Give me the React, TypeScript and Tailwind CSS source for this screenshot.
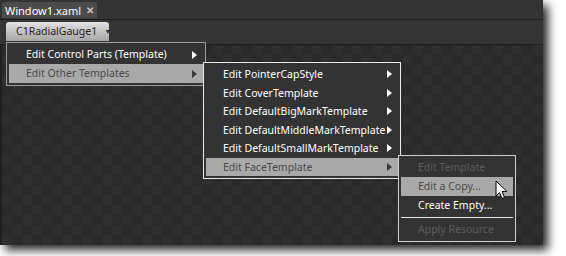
const font = { fontFamily: '"Noto Sans", "Liberation Sans", sans-serif' }

function Arrow({ className = 'text-white' }: { className?: string }) {
  return (
    <svg width="5" height="8" viewBox="0 0 5 8" className={className}>
      <path d="M0 0 L5 4 L0 8 Z" fill="currentColor" />
    </svg>
  )
}

interface ItemProps {
  label: string
  active?: boolean
  disabled?: boolean
  sub?: boolean
  h?: string
}

function MenuItem({ label, active, disabled, sub, h = 'h-[19px]' }: ItemProps) {
  const color = disabled ? 'text-[#5c5c5c]' : active ? 'text-[#4a4a4a]' : 'text-white'
  return (
    <div className={`flex items-center justify-between pl-[17px] pr-[6px] ${h} ${active ? 'bg-[#a9a9a9]' : ''}`}>
      <span className={`whitespace-nowrap ${color}`}>{label}</span>
      {sub && <Arrow className={active ? 'text-[#3a3a3a]' : 'text-white'} />}
    </div>
  )
}

function Cursor() {
  return (
    <svg width="13" height="20" viewBox="0 0 13 20" className="absolute left-[495px] top-[180px]">
      <path
        d="M1 1 L1 16 L4.5 12.5 L7 18.5 L9.5 17.5 L7 11.5 L12 11.5 Z"
        fill="#fff"
        stroke="#000"
        strokeWidth="1"
        strokeLinejoin="round"
      />
    </svg>
  )
}

export default function App() {
  return (
    <div className="relative w-[566px] h-[256px] bg-white overflow-hidden text-[10.5px] leading-none" style={font}>
      <div className="w-[543px] h-[245px] flex flex-col bg-[#2c2c2c] shadow-[5px_5px_9px_rgba(0,0,0,0.85)]">
        {/* tab strip */}
        <div className="h-[20px] bg-[#333] border-b border-[#1e1e1e] flex items-start pl-[2px] pt-[2px]">
          <div className="h-[16px] w-[95px] bg-[#4b4b4b] rounded-t-[2px] flex items-center pl-[3px] gap-[5px] text-[11px]">
            <span className="text-white">Window1.xaml</span>
            <span className="text-[#c8c8c8] text-[10px] font-bold">✕</span>
          </div>
        </div>
        {/* toolbar */}
        <div className="h-[25px] bg-[#343434] border-b border-[#1e1e1e] flex items-end pl-[6px]">
          <div className="h-[19px] w-[103px] mb-[3px] rounded-t-[3px] bg-gradient-to-b from-[#e2e2e2] to-[#a6a6a6] flex items-center pl-[10px] gap-[7px] text-[#222]">
            <span>C1RadialGauge1</span>
            <span className="text-[7px] text-[#333]">▼</span>
          </div>
        </div>
        {/* canvas */}
        <div className="flex-1 border-l-[2px] border-[#1f1f1f] bg-[repeating-conic-gradient(#2f2f2f_0_25%,#2a2a2a_0_50%)] bg-[length:20px_20px]" />
      </div>

      {/* menu 1 */}
      <div className="absolute left-[6px] top-[42px] w-[200px] border border-[#9c9c9c] bg-[#333] p-[2px]">
        <MenuItem label="Edit Control Parts (Template)" sub />
        <MenuItem label="Edit Other Templates" sub active />
      </div>

      {/* menu 2 */}
      <div className="absolute left-[203px] top-[62px] w-[198px] border border-[#e8e8e8] bg-[#333] p-[2px]">
        <MenuItem label="Edit PointerCapStyle" sub h="h-[18.5px]" />
        <MenuItem label="Edit CoverTemplate" sub h="h-[18.5px]" />
        <MenuItem label="Edit DefaultBigMarkTemplate" sub h="h-[18.5px]" />
        <MenuItem label="Edit DefaultMiddleMarkTemplate" sub h="h-[18.5px]" />
        <MenuItem label="Edit DefaultSmallMarkTemplate" sub h="h-[18.5px]" />
        <MenuItem label="Edit FaceTemplate" sub active h="h-[18.5px]" />
      </div>

      {/* menu 3 */}
      <div className="absolute left-[398px] top-[155px] w-[118px] border border-[#d0d0d0] bg-[#333] p-[2px]">
        <MenuItem label="Edit Template" disabled />
        <MenuItem label="Edit a Copy..." active />
        <MenuItem label="Create Empty..." />
        <div className="h-[5px] flex items-center">
          <div className="h-px w-full bg-[#e8e8e8]" />
        </div>
        <MenuItem label="Apply Resource" disabled />
      </div>

      <Cursor />
    </div>
  )
}
